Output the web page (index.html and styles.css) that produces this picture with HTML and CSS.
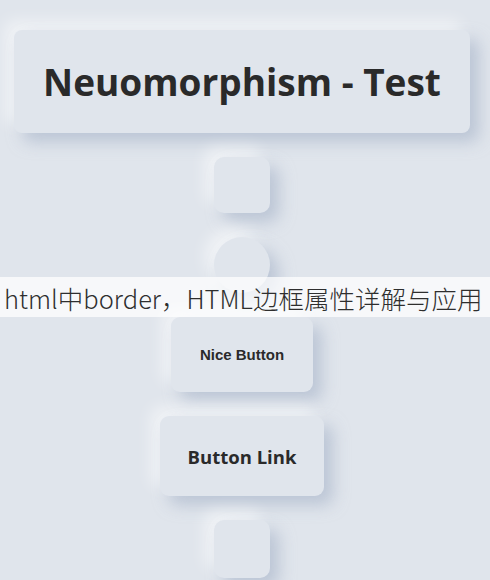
FILE: index.html
```html
<!DOCTYPE html>
<html lang="en">
<head>
<meta charset="utf-8">
<link rel="stylesheet" href="styles.css">
</head>
<body>
<main class="page">
  <h1 class="title-card">Neuomorphism - Test</h1>
  <div class="neu square"></div>
  <div class="neu circle"></div>
  <button class="neu nice-btn">Nice Button</button>
  <a class="neu link-btn" href="#">Button Link</a>
  <div class="neu square square-bottom"></div>
</main>
<div class="banner">html中border，HTML边框属性详解与应用</div>
</body>
</html>
```
FILE: styles.css
```css
html, body {
  margin: 0;
  padding: 0;
  background: #e0e5ec;
  height: 100%;
  overflow: hidden;
}
.page {
  display: flex;
  flex-direction: column;
  align-items: center;
  gap: 24px;
  padding-top: 30px;
  padding-right: 6px;
}
.neu {
  background: #e0e5ec;
  box-shadow: 9px 9px 16px rgba(163, 177, 198, 0.6),
              -9px -9px 16px rgba(255, 255, 255, 0.55);
  border: none;
}
.title-card {
  margin: 0;
  width: 456px;
  height: 103px;
  box-sizing: border-box;
  display: flex;
  align-items: center;
  justify-content: center;
  background: #e0e5ec;
  border-radius: 8px;
  box-shadow: 9px 9px 16px rgba(163, 177, 198, 0.6),
              -9px -9px 16px rgba(255, 255, 255, 0.55);
  font-family: "Open Sans", sans-serif;
  font-weight: 700;
  font-size: 37px;
  color: #2a2a2a;
}
.square {
  width: 56px;
  height: 56px;
  border-radius: 10px;
}
.circle {
  width: 56px;
  height: 56px;
  border-radius: 50%;
}
.nice-btn {
  width: 142px;
  height: 75px;
  border-radius: 9px;
  font-family: "Liberation Sans", Arial, sans-serif;
  font-weight: 700;
  font-size: 15px;
  color: #2a2a2a;
  padding: 0;
}
.link-btn {
  width: 164px;
  height: 80px;
  border-radius: 9px;
  display: flex;
  align-items: center;
  justify-content: center;
  font-family: "Open Sans", sans-serif;
  font-weight: 700;
  font-size: 18.5px;
  color: #2a2a2a;
  text-decoration: none;
}
.square-bottom {
  height: 58px;
}
.banner {
  position: absolute;
  left: 0;
  right: 0;
  top: 277px;
  height: 40px;
  background: rgba(255, 255, 255, 0.72);
  display: flex;
  align-items: center;
  padding-left: 4px;
  font-family: "Noto Sans CJK SC", "Noto Sans", sans-serif;
  font-weight: 300;
  font-size: 25.5px;
  color: #2e2e2e;
  white-space: nowrap;
}
```
